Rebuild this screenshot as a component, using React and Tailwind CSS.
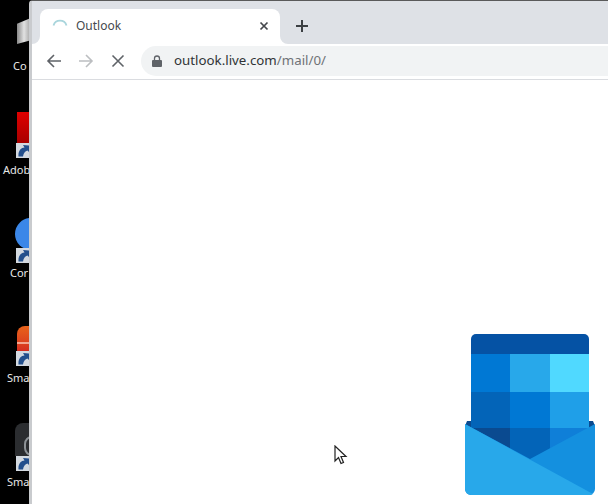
import React from "react";

const Shortcut = ({ className }) => (
  <div className={`absolute left-[16px] w-[14px] h-[15px] bg-[#d3d9e0] ${className}`}>
    <svg viewBox="0 0 14 15" className="w-[14px] h-[15px]">
      <path d="M2.500 13.500C2 8 5 4.500 8.500 4.500L7 2L14 2.500L14 10L11.500 7.500C9 8 7.500 10 7 13.500Z" fill="#234f8c" />
    </svg>
  </div>
);

const DesktopIcon = ({ top, label, labelLeft, iconClass, iconTop, iconHeight, arrowTop, children }) => (
  <>
    <div
      className={`absolute ${iconClass}`}
      style={{ top: iconTop, height: iconHeight }}
    >
      {children}
    </div>
    {arrowTop && <Shortcut className={arrowTop} />}
    <span
      className="absolute text-[11px] leading-[16px] text-[#e8e8e8] whitespace-nowrap font-['Noto_Sans',sans-serif]"
      style={{ top, left: labelLeft }}
    >
      {label}
    </span>
  </>
);

const OutlookLogo = () => (
  <svg viewBox="0 0 132 162" className="w-[132px] h-[162px] blur-[0.5px]">
    <path d="M1 92L3 87H7V95zM131 92L129 87H125V95z" fill="#0a4a90" />
    <path d="M7 20V5a5 5 0 0 1 5-5h108a5 5 0 0 1 5 5v15z" fill="#0552a4" />
    <rect x="7" y="20" width="39" height="38" fill="#0078d4" />
    <rect x="46" y="20" width="40" height="38" fill="#28a8ea" />
    <rect x="86" y="20" width="39" height="38" fill="#50d9ff" />
    <rect x="7" y="58" width="39" height="36" fill="#0364b8" />
    <rect x="46" y="58" width="40" height="36" fill="#0078d4" />
    <rect x="86" y="58" width="39" height="36" fill="#1f9fe8" />
    <rect x="7" y="94" width="39" height="36" fill="#0a4a90" />
    <rect x="46" y="94" width="40" height="36" fill="#0364b8" />
    <rect x="86" y="94" width="39" height="36" fill="#0f7fd8" />
    <path d="M1 90L66 125L131 90V155a6 6 0 0 1-6 6H7a6 6 0 0 1-6-6z" fill="#1490df" />
    <path d="M1 90L129 160a6 6 0 0 1-4 1H7a6 6 0 0 1-6-6z" fill="#28a8ea" />
  </svg>
);

const App = () => {
  return (
    <div className="flex w-[608px] h-[504px] overflow-hidden bg-black font-['Noto_Sans',sans-serif]">
      {/* Desktop strip */}
      <div className="relative w-[29px] shrink-0 overflow-hidden bg-black">
        <DesktopIcon
          top={58}
          label="Co"
          labelLeft={13}
          iconTop={18}
          iconHeight={26}
          iconClass="left-[17px] w-[14px] bg-gradient-to-r from-[#8a8a8a] via-[#e2e2e2] to-[#a0a0a0] [clip-path:polygon(0_22%,100%_0,100%_85%,0_100%)]"
        />
        <DesktopIcon
          top={162}
          label="Adob"
          labelLeft={3}
          iconTop={112}
          iconHeight={31}
          iconClass="left-[17px] w-[14px] bg-gradient-to-b from-[#e00000] to-[#a80000]"
          arrowTop="top-[143px]"
        />
        <DesktopIcon
          top={265}
          label="Cor"
          labelLeft={10}
          iconTop={218}
          iconHeight={32}
          iconClass="left-[15px] w-[32px] rounded-full bg-[#3b87e8]"
          arrowTop="top-[248px]"
        />
        <DesktopIcon
          top={370}
          label="Sma"
          labelLeft={7}
          iconTop={326}
          iconHeight={26}
          iconClass="left-[17px] w-[14px] rounded-tl-lg bg-gradient-to-b from-[#e8631a] to-[#d42a20]"
          arrowTop="top-[351px]"
        >
          <div className="mt-[16px] h-[2px] bg-[#f2a58e]" />
        </DesktopIcon>
        <DesktopIcon
          top={474}
          label="Sma"
          labelLeft={7}
          iconTop={423}
          iconHeight={33}
          iconClass="left-[15px] w-[20px] rounded-tl-lg bg-[#2b2d30]"
          arrowTop="top-[456px]"
        >
          <div className="mt-[13px] ml-[9px] w-[16px] h-[20px] rounded-full border-2 border-[#8d9296]" />
        </DesktopIcon>
      </div>

      {/* Browser window */}
      <div className="relative flex-1 flex flex-col min-w-0 bg-white border-l-[3px] border-[#c9cbce] border-t border-t-[#5a5a5a] rounded-tl-[4px]">
        {/* Tab strip */}
        <div className="h-[43px] shrink-0 flex items-end bg-[#dee1e6] pl-[8px]">
          <svg viewBox="0 0 8 8" className="-ml-[8px] w-[8px] h-[8px]" fill="#fff">
            <path d="M8 0V8H0A8 8 0 0 0 8 0Z" />
          </svg>
          <div className="w-[240px] h-[35px] flex items-center bg-white rounded-t-[8px] pl-[12px] pr-[11px] pb-[2px]">
            <svg viewBox="0 0 16 16" className="w-[16px] h-[16px]" fill="none">
              <path d="M1.500 7.500A6.800 6.800 0 0 1 14.500 7.500" stroke="#a9d5dc" strokeWidth="1.800" />
            </svg>
            <span className="ml-[8px] text-[12px] text-[#45494d]">Outlook</span>
            <svg viewBox="0 0 10 10" className="ml-auto w-[10px] h-[10px]" stroke="#45484c" strokeWidth="1.700">
              <path d="M1.500 1.500L8.500 8.500M8.500 1.500L1.500 8.500" />
            </svg>
          </div>
          <svg viewBox="0 0 8 8" className="w-[8px] h-[8px]" fill="#fff">
            <path d="M0 0V8H8A8 8 0 0 1 0 0Z" />
          </svg>
          <svg viewBox="0 0 14 14" className="ml-[7px] mb-[11px] w-[14px] h-[14px]" stroke="#3c4043" strokeWidth="2">
            <path d="M7 1V13M1 7H13" />
          </svg>
        </div>

        {/* Toolbar */}
        <div className="h-[36px] shrink-0 flex items-center bg-white border-b border-[#dadce0] pl-[14px] pb-[2px]">
          <svg viewBox="0 0 16 16" className="w-[16px] h-[16px]" fill="none" stroke="#5f6368" strokeWidth="1.600">
            <path d="M15 8H2M8 2L2 8L8 14" />
          </svg>
          <svg viewBox="0 0 16 16" className="ml-[16px] w-[16px] h-[16px]" fill="none" stroke="#bcbec1" strokeWidth="1.600">
            <path d="M1 8H14M8 2L14 8L8 14" />
          </svg>
          <svg viewBox="0 0 14 14" className="ml-[17px] w-[14px] h-[14px]" fill="none" stroke="#5f6368" strokeWidth="1.600">
            <path d="M1.500 1.500L12.500 12.500M12.500 1.500L1.500 12.500" />
          </svg>
          <div className="ml-[16px] flex-1 h-[30px] flex items-center bg-[#f1f3f4] rounded-l-full pl-[11px]">
            <svg viewBox="0 0 10 12" className="w-[10px] h-[12px]" fill="#5f6368">
              <path d="M1 5h8a1 1 0 0 1 1 1v5a1 1 0 0 1-1 1H1a1 1 0 0 1-1-1V6a1 1 0 0 1 1-1z" />
              <path d="M2.500 5V3.500a2.500 2.500 0 0 1 5 0V5" fill="none" stroke="#5f6368" strokeWidth="1.300" />
            </svg>
            <span className="ml-[12px] text-[13.300px] text-[#303336]">
              outlook.live.com<span className="text-[#6f7276]">/mail/0/</span>
            </span>
          </div>
        </div>

        {/* Page */}
        <div className="flex-1 bg-white" />

        {/* Logo over the page */}
        <div className="absolute left-[432px] top-[333px]">
          <OutlookLogo />
        </div>

        {/* Cursor */}
        <svg viewBox="0 0 14 20" className="absolute left-[302px] top-[444px] w-[14px] h-[20px]">
          <path d="M1 1V16L4.500 12.500L7 18.500L9.500 17.500L7 11.500H12Z" fill="#fff" stroke="#222" strokeWidth="1.200" />
        </svg>
      </div>
    </div>
  );
};

export default App;
